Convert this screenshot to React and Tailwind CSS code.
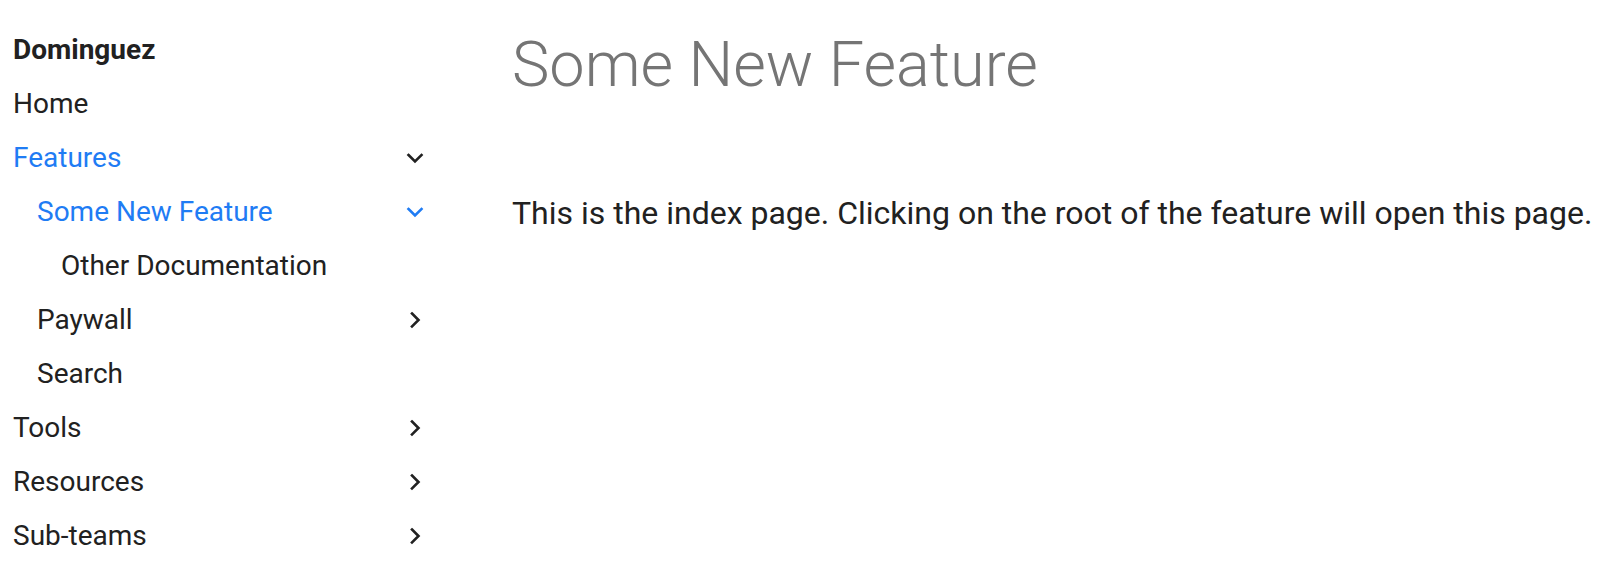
import React from "react";

const nav = [
  { label: "Home", level: 0 },
  { label: "Features", level: 0, active: true, chevron: "down" },
  { label: "Some New Feature", level: 1, active: true, chevron: "down" },
  { label: "Other Documentation", level: 2 },
  { label: "Paywall", level: 1, chevron: "right" },
  { label: "Search", level: 1 },
  { label: "Tools", level: 0, chevron: "right" },
  { label: "Resources", level: 0, chevron: "right" },
  { label: "Sub-teams", level: 0, chevron: "right" },
];

const indent = ["pl-0", "pl-[24px]", "pl-[48px]"];

function Chevron({ dir, className }) {
  return (
    <svg className={className} width="20" height="20" viewBox="0 0 20 20" fill="none" stroke="currentColor" strokeWidth="2.6" strokeLinecap="square" strokeLinejoin="miter">
      {dir === "down" ? <path d="M3.5 7l6.5 6.5 6.5-6.5" /> : <path d="M7 3.5l6.5 6.5-6.5 6.5" />}
    </svg>
  );
}

export default function App() {
  return (
    <div className="flex min-h-screen bg-white text-[#212121]" style={{ fontFamily: "Roboto, sans-serif" }}>
      <aside className="w-[432px] shrink-0 pl-[13px] pr-[7px] pt-[23px]">
        <div className="h-[54px] flex items-center text-[28px] font-bold">Dominguez</div>
        <ul>
          {nav.map((item) => (
            <li
              key={item.label}
              className={`h-[54px] flex items-center justify-between text-[28px] ${indent[item.level]} ${item.active ? "text-[#1f7cf4]" : "text-[#212121]"}`}
            >
              <span>{item.label}</span>
              {item.chevron && (
                <Chevron
                  dir={item.chevron}
                  className={item.level === 1 && item.active ? "text-[#1f7cf4]" : "text-[#212121]"}
                />
              )}
            </li>
          ))}
        </ul>
      </aside>
      <main className="flex-1 pl-[80px] pt-[27px]">
        <h1 className="text-[63px] leading-[1.2] font-light text-[#757575]">Some New Feature</h1>
        <p className="mt-[86px] text-[32px] leading-[1.5]">
          This is the index page. Clicking on the root of the feature will open this page.
        </p>
      </main>
    </div>
  );
}
